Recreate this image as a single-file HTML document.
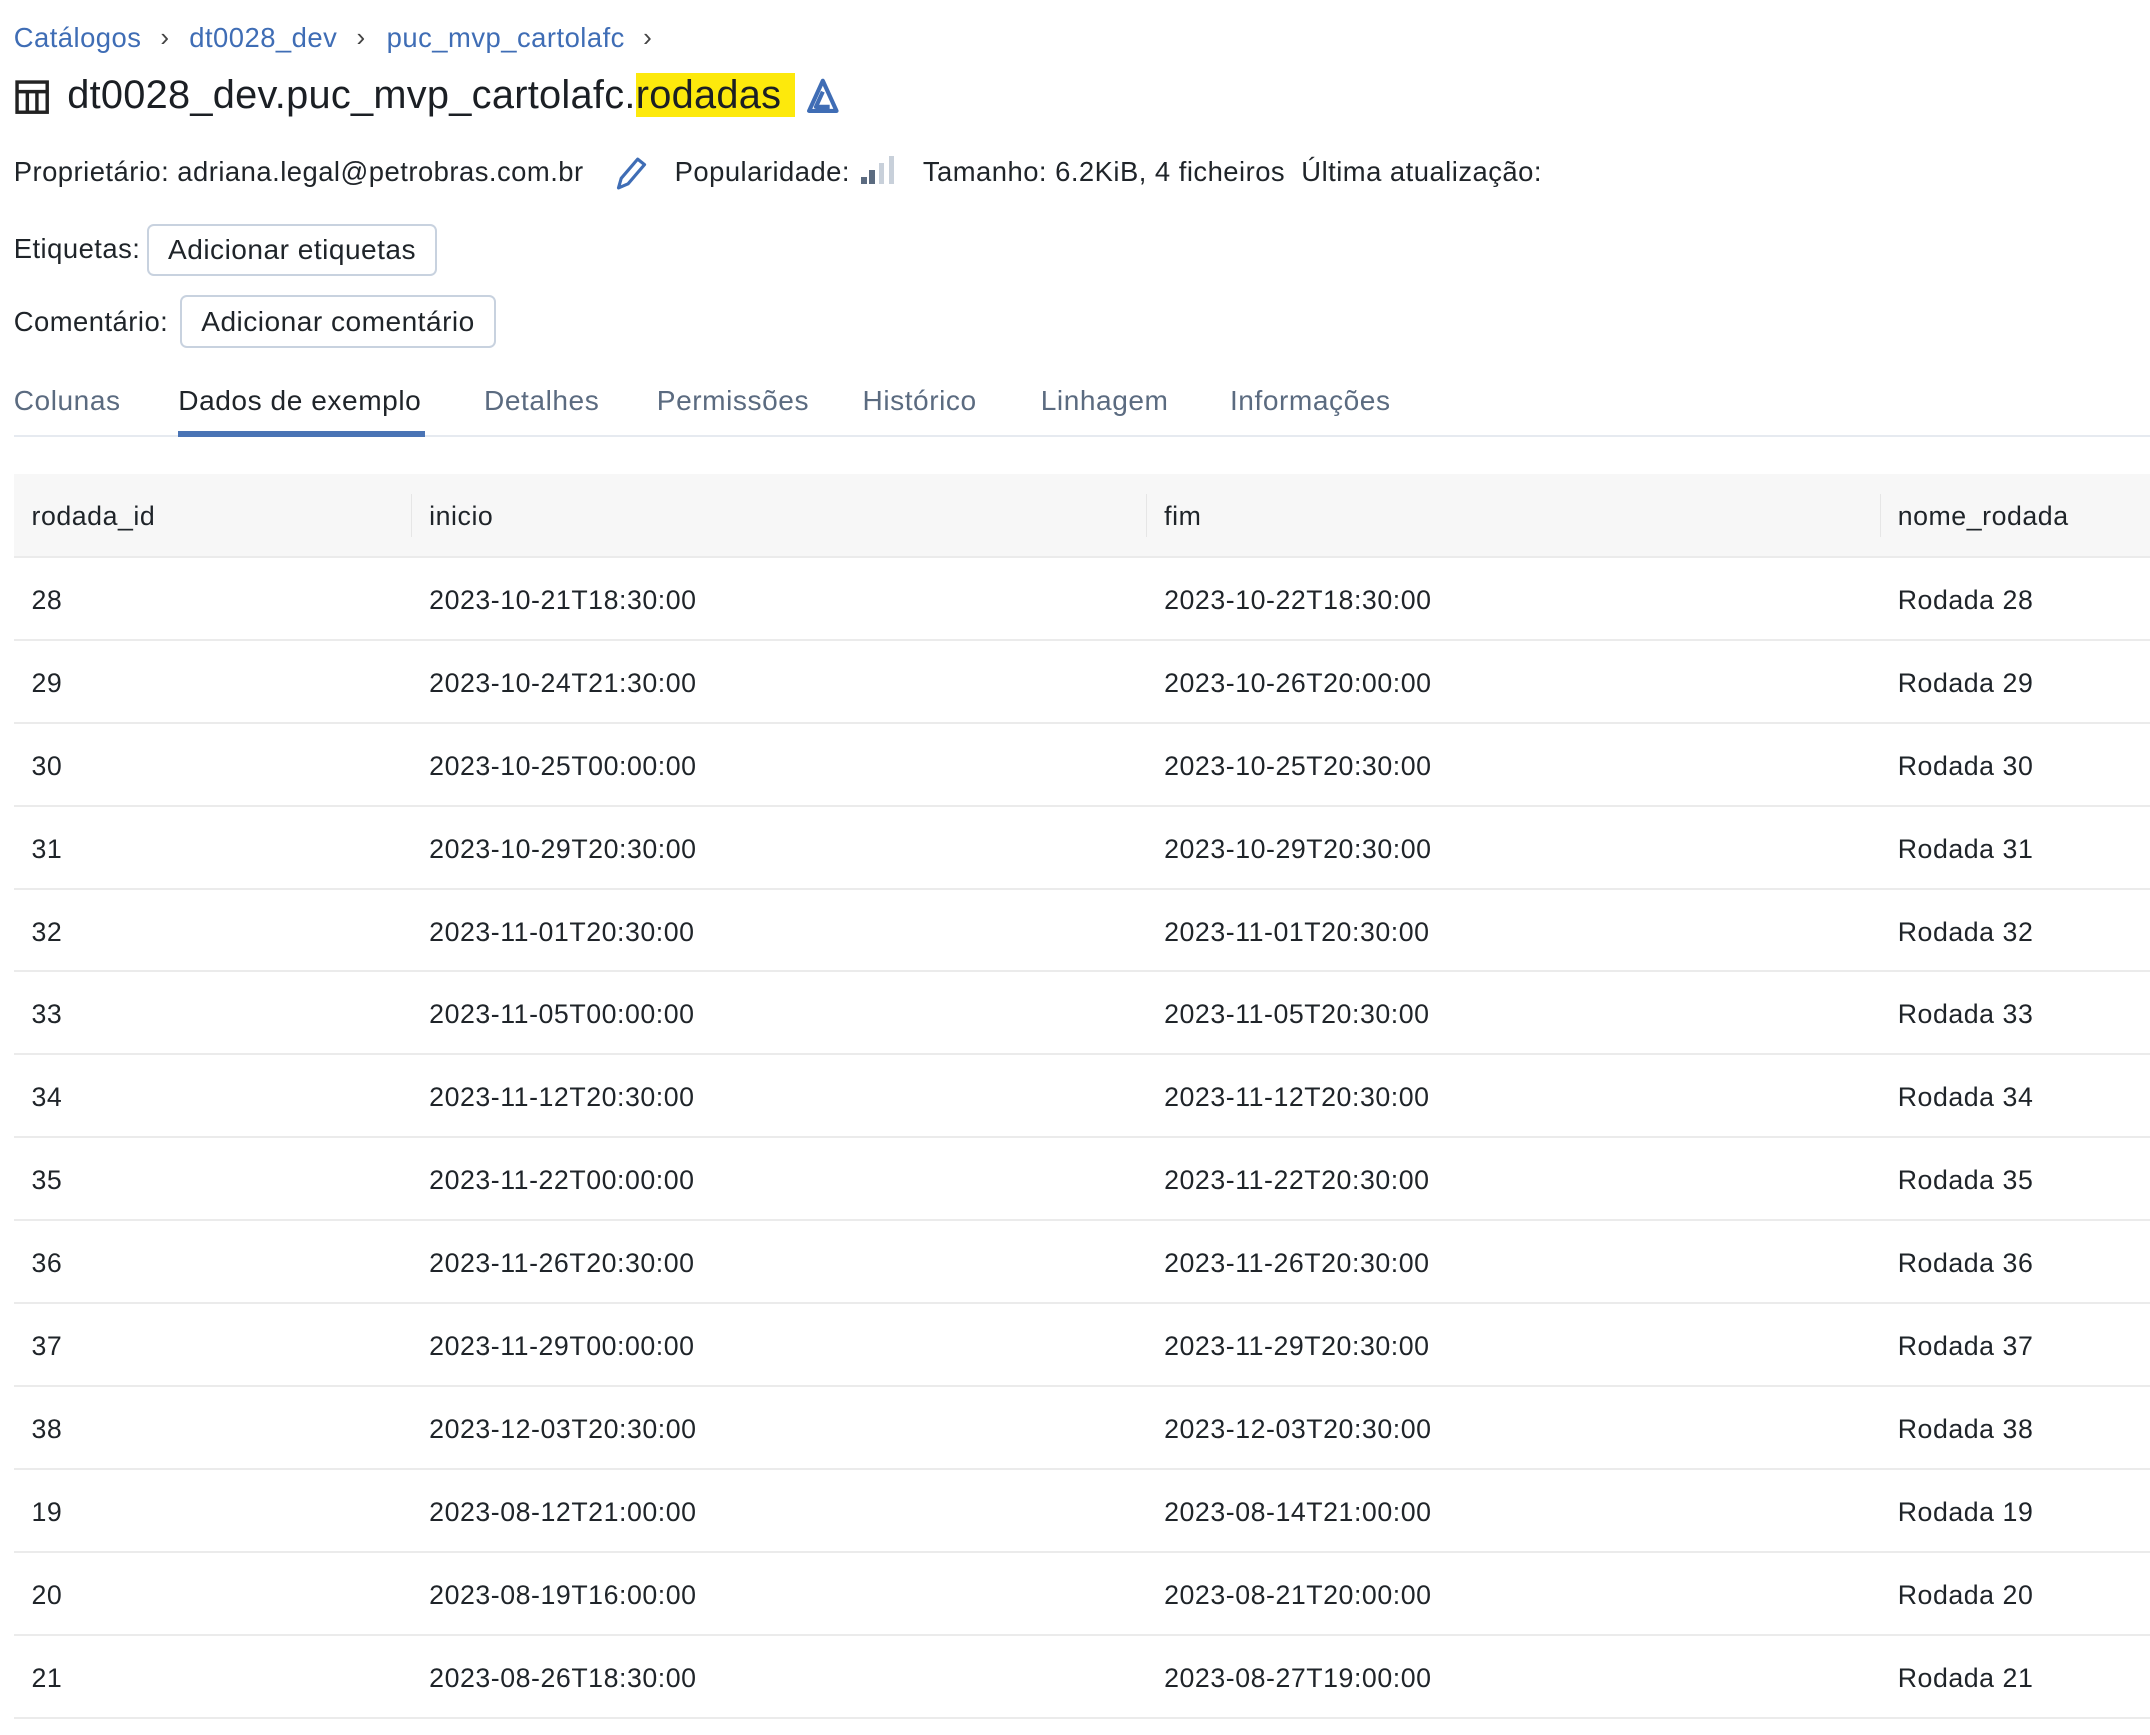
<!DOCTYPE html>
<html><head><meta charset="utf-8"><style>
html,body{margin:0;padding:0;background:#fff;}
body{width:2150px;height:1735px;overflow:hidden;}
#w{zoom:1.3712;width:1568px;height:1265px;position:relative;font-family:"Segoe UI","Liberation Sans",sans-serif;color:#1f2429;font-size:20px;letter-spacing:0.35px;}
.a{position:absolute;white-space:nowrap;}
.bc{color:#3f6db5;font-size:20px;}
.sep{color:#444;font-size:19px;}
.btn{position:absolute;border:1.5px solid #c8d2df;border-radius:5px;box-sizing:border-box;display:flex;align-items:center;justify-content:center;font-size:20.5px;}
.tab{position:absolute;top:281px;font-size:20.5px;color:#5b6b80;white-space:nowrap;letter-spacing:0.4px;}
table{position:absolute;left:10px;top:346px;width:1558px;border-collapse:collapse;font-size:19.5px;letter-spacing:0.4px;}
th{background:#f7f7f7;height:60px;text-align:left;font-weight:normal;padding:2px 0 0 13px;box-sizing:border-box;border-bottom:2px solid #ebebeb;position:relative;}
th+th::before{content:"";position:absolute;left:0;top:14px;height:32px;border-left:1px solid #e6e6e6;}
td{height:60.5px;padding:3px 0 0 13px;box-sizing:border-box;border-bottom:1.5px solid #ebebeb;}
.hl{background:#fde90c;padding-right:10px;}
</style></head><body><div id="w">
<div class="a bc" style="left:10px;top:16px">Catálogos</div>
<div class="a sep" style="left:117px;top:16px">›</div>
<div class="a bc" style="left:138px;top:16px">dt0028_dev</div>
<div class="a sep" style="left:260px;top:16px">›</div>
<div class="a bc" style="left:282px;top:16px">puc_mvp_cartolafc</div>
<div class="a sep" style="left:469px;top:16px">›</div>
<svg class="a" style="left:11px;top:58px" width="25" height="25" viewBox="0 0 25 25"><rect x="1.5" y="1.5" width="22" height="22" fill="none" stroke="#222" stroke-width="2.5"/><path d="M1.5 8.5H23.5M9 8.5V23.5M16 8.5V23.5" stroke="#222" stroke-width="2.5"/></svg>
<div class="a" style="left:49px;top:55px;font-size:29px;letter-spacing:0.2px;color:#1b1f24;line-height:30px">dt0028_dev.puc_mvp_cartolafc.<span class="hl">rodadas</span></div>
<svg class="a" style="left:587px;top:57px" width="26" height="27" viewBox="0 0 26 27"><path d="M13 2L3 24H23Z M13 10L8 21H18" fill="none" stroke="#3f6db5" stroke-width="3" stroke-linejoin="round"/></svg>
<div class="a" style="left:10px;top:114px">Proprietário: adriana.legal@petrobras.com.br</div>
<svg class="a" style="left:447px;top:113px" width="26" height="28" viewBox="0 0 26 28"><path d="M4 24L6 17L18 3L23 7L11 21Z M4 24L11 21" fill="none" stroke="#3f6db5" stroke-width="2.3" stroke-linejoin="round"/></svg>
<div class="a" style="left:492px;top:114px">Popularidade:</div>
<div class="a" style="left:628px;top:129px;width:4px;height:5px;background:#5b6b80"></div>
<div class="a" style="left:634px;top:124px;width:4px;height:10px;background:#5b6b80"></div>
<div class="a" style="left:641px;top:119px;width:4px;height:15px;background:#c8d0da"></div>
<div class="a" style="left:648px;top:114px;width:4px;height:20px;background:#c8d0da"></div>
<div class="a" style="left:673px;top:114px">Tamanho: 6.2KiB, 4 ficheiros&nbsp;&nbsp;Última atualização:</div>
<div class="a" style="left:10px;top:170px">Etiquetas:</div>
<div class="btn" style="left:107px;top:163px;width:212px;height:38px">Adicionar etiquetas</div>
<div class="a" style="left:10px;top:223px">Comentário:</div>
<div class="btn" style="left:131px;top:215px;width:231px;height:39px">Adicionar comentário</div>
<div class="tab" style="left:10px">Colunas</div>
<div class="tab" style="left:130px;color:#1f2429">Dados de exemplo</div>
<div class="tab" style="left:353px">Detalhes</div>
<div class="tab" style="left:479px">Permissões</div>
<div class="tab" style="left:629px">Histórico</div>
<div class="tab" style="left:759px">Linhagem</div>
<div class="tab" style="left:897px">Informações</div>
<div class="a" style="left:10px;top:317px;width:1558px;height:2px;background:#e6eaf0"></div>
<div class="a" style="left:130px;top:314px;width:180px;height:5px;background:#4a74b5"></div>
<table>
<tr><th style="width:290px">rodada_id</th><th style="width:536px">inicio</th><th style="width:535px">fim</th><th>nome_rodada</th></tr>
<tr><td>28</td><td>2023-10-21T18:30:00</td><td>2023-10-22T18:30:00</td><td>Rodada 28</td></tr>
<tr><td>29</td><td>2023-10-24T21:30:00</td><td>2023-10-26T20:00:00</td><td>Rodada 29</td></tr>
<tr><td>30</td><td>2023-10-25T00:00:00</td><td>2023-10-25T20:30:00</td><td>Rodada 30</td></tr>
<tr><td>31</td><td>2023-10-29T20:30:00</td><td>2023-10-29T20:30:00</td><td>Rodada 31</td></tr>
<tr><td>32</td><td>2023-11-01T20:30:00</td><td>2023-11-01T20:30:00</td><td>Rodada 32</td></tr>
<tr><td>33</td><td>2023-11-05T00:00:00</td><td>2023-11-05T20:30:00</td><td>Rodada 33</td></tr>
<tr><td>34</td><td>2023-11-12T20:30:00</td><td>2023-11-12T20:30:00</td><td>Rodada 34</td></tr>
<tr><td>35</td><td>2023-11-22T00:00:00</td><td>2023-11-22T20:30:00</td><td>Rodada 35</td></tr>
<tr><td>36</td><td>2023-11-26T20:30:00</td><td>2023-11-26T20:30:00</td><td>Rodada 36</td></tr>
<tr><td>37</td><td>2023-11-29T00:00:00</td><td>2023-11-29T20:30:00</td><td>Rodada 37</td></tr>
<tr><td>38</td><td>2023-12-03T20:30:00</td><td>2023-12-03T20:30:00</td><td>Rodada 38</td></tr>
<tr><td>19</td><td>2023-08-12T21:00:00</td><td>2023-08-14T21:00:00</td><td>Rodada 19</td></tr>
<tr><td>20</td><td>2023-08-19T16:00:00</td><td>2023-08-21T20:00:00</td><td>Rodada 20</td></tr>
<tr><td>21</td><td>2023-08-26T18:30:00</td><td>2023-08-27T19:00:00</td><td>Rodada 21</td></tr>
</table>
</div></body></html>
